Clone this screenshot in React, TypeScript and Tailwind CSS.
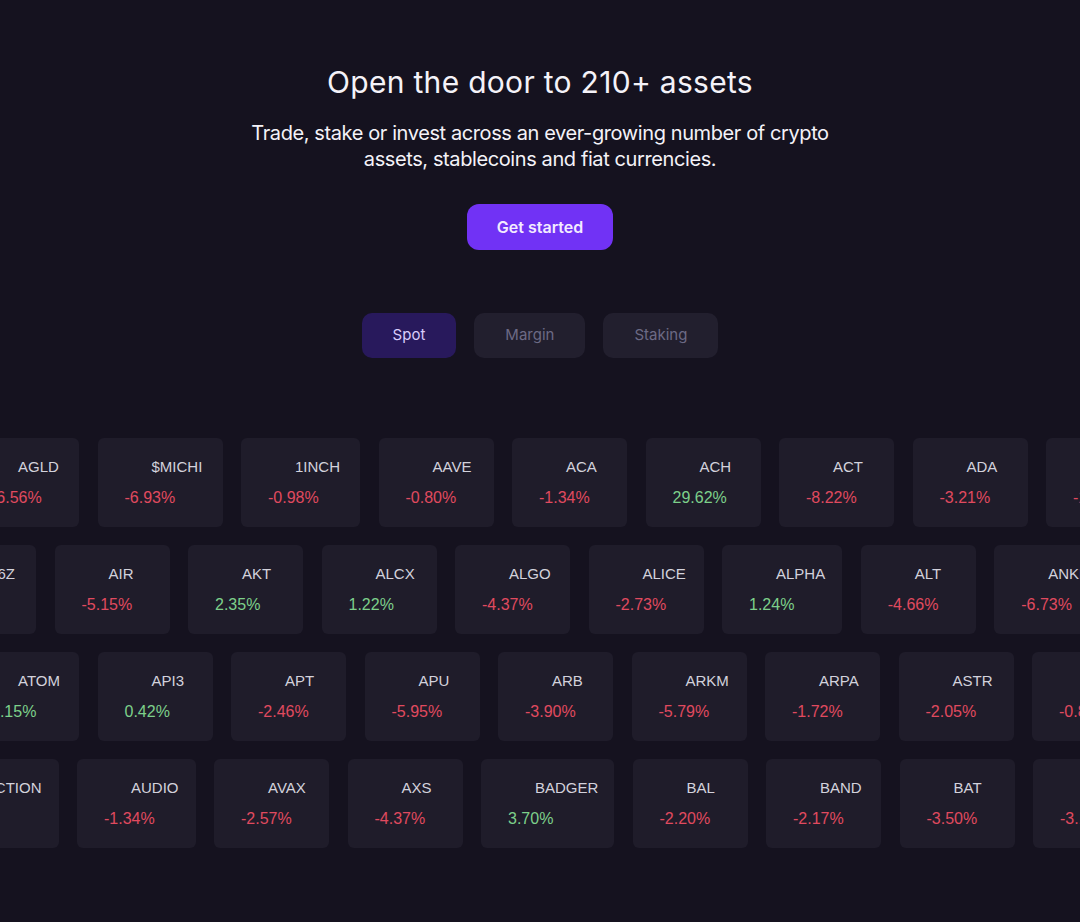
import React from "react";

type Coin = { t: string; p: string; w?: string };

const rows: { offset: string; coins: Coin[] }[] = [
  {
    offset: "ml-[-36px]",
    coins: [
      { t: "AGLD", p: "-6.56%" },
      { t: "$MICHI", p: "-6.93%", w: "w-[125px]" },
      { t: "1INCH", p: "-0.98%", w: "w-[119px]" },
      { t: "AAVE", p: "-0.80%" },
      { t: "ACA", p: "-1.34%" },
      { t: "ACH", p: "29.62%" },
      { t: "ACT", p: "-8.22%" },
      { t: "ADA", p: "-3.21%" },
      { t: "AERO", p: "-1.87%" },
    ],
  },
  {
    offset: "ml-[-79px]",
    coins: [
      { t: "AI16Z", p: "-7.41%" },
      { t: "AIR", p: "-5.15%" },
      { t: "AKT", p: "2.35%" },
      { t: "ALCX", p: "1.22%" },
      { t: "ALGO", p: "-4.37%" },
      { t: "ALICE", p: "-2.73%" },
      { t: "ALPHA", p: "1.24%" },
      { t: "ALT", p: "-4.66%" },
      { t: "ANKR", p: "-6.73%" },
    ],
  },
  {
    offset: "ml-[-36px]",
    coins: [
      { t: "ATOM", p: "1.15%" },
      { t: "API3", p: "0.42%" },
      { t: "APT", p: "-2.46%" },
      { t: "APU", p: "-5.95%" },
      { t: "ARB", p: "-3.90%" },
      { t: "ARKM", p: "-5.79%" },
      { t: "ARPA", p: "-1.72%" },
      { t: "ASTR", p: "-2.05%" },
      { t: "ATH", p: "-0.84%" },
    ],
  },
  {
    offset: "ml-[-80px]",
    coins: [
      { t: "AUCTION", p: "-2.91%" },
      { t: "AUDIO", p: "-1.34%" },
      { t: "AVAX", p: "-2.57%" },
      { t: "AXS", p: "-4.37%" },
      { t: "BADGER", p: "3.70%", w: "w-[133px]" },
      { t: "BAL", p: "-2.20%" },
      { t: "BAND", p: "-2.17%" },
      { t: "BAT", p: "-3.50%" },
      { t: "BCH", p: "-3.12%" },
    ],
  },
];

function Card({ c }: { c: Coin }) {
  const up = !c.p.startsWith("-");
  return (
    <div
      className={
        "shrink-0 min-w-[115px] h-[89px] rounded-md bg-[#1f1c2a] pl-[27px] pr-[17px] pt-[19px] flex flex-col font-['Liberation_Sans',Arial,sans-serif] " +
        (c.w ?? "")
      }
    >
      <div className="flex">
        <div className="w-[27px] shrink-0" />
        <span className="text-[15px] leading-5 text-[#d3d2dc] whitespace-nowrap">{c.t}</span>
      </div>
      <span
        className={
          "mt-[10px] text-[16px] leading-[22px] whitespace-nowrap " +
          (up ? "text-[#7dd08a]" : "text-[#e04a5f]")
        }
      >
        {c.p}
      </span>
    </div>
  );
}

export default function App() {
  return (
    <div className="min-h-[922px] w-full bg-[#15121f] overflow-hidden flex flex-col items-center font-['Inter',sans-serif]">
      <h1 className="mt-[64px] text-[30px] leading-9 text-[#f4f2f8] font-normal tracking-[0.3px]">
        Open the door to 210+ assets
      </h1>
      <p className="mt-[20px] text-[20px] leading-[26px] text-[#f4f2f8] text-center w-[600px] tracking-[-0.4px]">
        Trade, stake or invest across an ever-growing number of crypto assets, stablecoins and fiat currencies.
      </p>
      <button className="mt-[32px] h-[46px] w-[146px] rounded-xl bg-[#7132f5] text-[#f3ebff] text-[16px] font-semibold">
        Get started
      </button>
      <div className="mt-[63px] flex gap-[18px]">
        <div className="h-[45px] px-[31px] rounded-[10px] bg-[#28195c] text-[#d9cdfb] text-[15px] flex items-center">Spot</div>
        <div className="h-[45px] px-[31px] rounded-[10px] bg-[#221f2e] text-[#6c6a85] text-[15px] flex items-center">Margin</div>
        <div className="h-[45px] px-[31px] rounded-[10px] bg-[#221f2e] text-[#6c6a85] text-[15px] flex items-center">Staking</div>
      </div>
      <div className="mt-[80px] w-full flex flex-col gap-[18px]">
        {rows.map((r, i) => (
          <div key={i} className={"flex gap-[18.5px] " + r.offset}>
            {r.coins.map((c) => (
              <Card key={c.t} c={c} />
            ))}
          </div>
        ))}
      </div>
    </div>
  );
}
